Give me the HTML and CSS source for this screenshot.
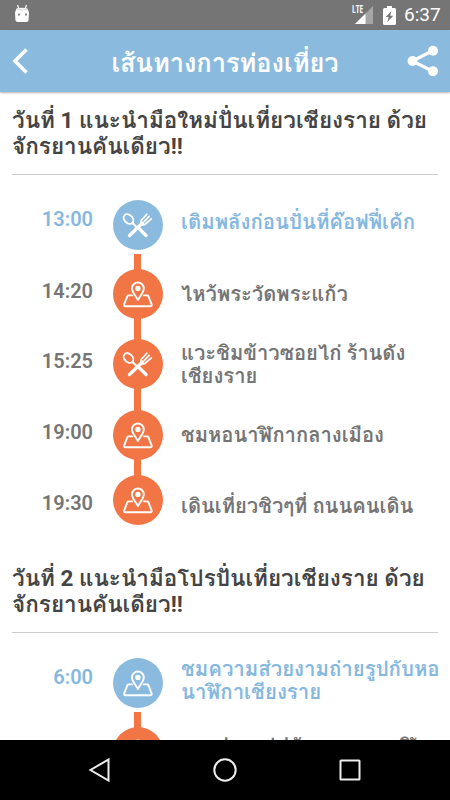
FILE: index.html
```
<!DOCTYPE html>
<html lang="th">
<head>
  <meta charset="UTF-8" />
  <meta name="viewport" content="width=device-width, initial-scale=1.0" />
  <title>เส้นทางการท่องเที่ยว</title>
  <link rel="stylesheet" href="styles.css">
</head>
<body>
  <svg class="sprite" width="0" height="0">
    <symbol id="icon-food" viewBox="0 0 50 50">
      <g fill="none" stroke="#fff" stroke-linecap="round">
        <ellipse cx="15.500" cy="19" rx="4" ry="5.500" transform="rotate(-45 15.500 19)" stroke-width="1.900" />
        <path d="M19.500 23l4 4" stroke-width="2.200" />
        <path d="M25.500 28l7.500 7.500M16.500 35.500l13-12.500" stroke-width="3.300" />
        <path d="M28.200 20.500q-.9 2.600.4 3.800t3.200.2l6.600-5.700M28.200 20.500l5.600-6.300M31.300 21.300l4.800-4.900" stroke-width="1.700" />
      </g>
    </symbol>
    <symbol id="icon-place" viewBox="0 0 50 50">
      <g fill="none" stroke="#fff" stroke-width="1.900" stroke-linejoin="round" stroke-linecap="round">
        <path d="M19 26.400h-3.500q-.8 0-1.100.8l-3.200 8.200q-.6 1.900 1.300 1.900h24.800q1.900 0 1.300-1.900l-3.200-8.200q-.3-.8-1.100-.8h-3.500" />
        <path d="M24.900 31c-2-4-5.900-7.800-5.900-11.600a5.900 5.900 0 0 1 11.800 0c0 3.800-3.900 7.600-5.900 11.600z" />
      </g>
      <circle cx="24.900" cy="19.400" r="2.700" fill="#fff" />
    </symbol>
  </svg>

  <div class="status-bar">
    <svg class="status-bot" width="16" height="19" viewBox="0 0 16 19">
      <path d="M3.500 1l1.300 3.500M12.500 1l-1.300 3.500" stroke="#fff" stroke-width="1.200" />
      <path d="M2.500 4.500q5.500-1.500 11 0L15 8.500l-.4 7.500q-.3 2-2.300 2H3.700q-2 0-2.300-2L1 8.500z" fill="#fff" />
      <path d="M3 5.500h10" stroke="#ddd" stroke-width="1.500" />
      <path d="M4 10.500h2M11 10.500h2" stroke="#888" stroke-width="1.800" />
    </svg>
    <div class="status-right">
      <span class="lte">LTE</span>
      <svg class="signal" width="18" height="18" viewBox="0 0 18 18">
        <path d="M18 0v18H0z" fill="#a6a6a6" />
        <path d="M10.500 7.500V18H0z" fill="#fff" />
      </svg>
      <svg class="battery" width="13" height="19" viewBox="0 0 13 19">
        <path d="M4 0h5v2h2.500q1.500 0 1.500 1.500v14q0 1.500-1.500 1.500h-10Q0 19 0 17.500v-14Q0 2 1.500 2H4z" fill="#fff" />
        <path d="M8.500 5L2.700 11h3l-1.400 5 6-6.200H7.200z" fill="#757575" />
      </svg>
      <span class="clock">6:37</span>
    </div>
  </div>

  <header class="toolbar">
    <svg width="16" height="26" viewBox="0 0 16 26">
      <path d="M14.500 1.500L3 13l11.500 11.500" fill="none" stroke="#fff" stroke-width="3.600" />
    </svg>
    <h1>เส้นทางการท่องเที่ยว</h1>
    <svg width="32" height="32" viewBox="0 0 32 32">
      <path d="M26 5.500L5.500 16 26 26.500" fill="none" stroke="#fff" stroke-width="3.200" />
      <g fill="#fff">
        <circle cx="26" cy="5.700" r="5" />
        <circle cx="5.500" cy="16" r="5" />
        <circle cx="26" cy="26.300" r="5" />
      </g>
    </svg>
  </header>

  <main class="content">
    <section class="day">
      <h2>วันที่ 1 แนะนำมือใหม่ปั่นเที่ยวเชียงราย ด้วย<br>จักรยานคันเดียว!!</h2>
      <ul class="timeline">
        <li class="stop first">
          <span class="time">13:00</span>
          <div class="rail"><svg class="dot"><use href="#icon-food" /></svg></div>
          <p class="place">เติมพลังก่อนปั่นที่ค๊อฟฟี่เค้ก</p>
        </li>
        <li class="stop">
          <span class="time">14:20</span>
          <div class="rail"><svg class="dot"><use href="#icon-place" /></svg></div>
          <p class="place">ไหว้พระวัดพระแก้ว</p>
        </li>
        <li class="stop">
          <span class="time">15:25</span>
          <div class="rail"><svg class="dot"><use href="#icon-food" /></svg></div>
          <p class="place">แวะชิมข้าวซอยไก่ ร้านดัง<br>เชียงราย</p>
        </li>
        <li class="stop">
          <span class="time">19:00</span>
          <div class="rail"><svg class="dot"><use href="#icon-place" /></svg></div>
          <p class="place">ชมหอนาฬิกากลางเมือง</p>
        </li>
        <li class="stop last">
          <span class="time">19:30</span>
          <div class="rail"><svg class="dot"><use href="#icon-place" /></svg></div>
          <p class="place">เดินเที่ยวชิวๆที่ ถนนคนเดิน</p>
        </li>
      </ul>
    </section>

    <section class="day">
      <h2>วันที่ 2 แนะนำมือโปรปั่นเที่ยวเชียงราย ด้วย<br>จักรยานคันเดียว!!</h2>
      <ul class="timeline">
        <li class="stop first">
          <span class="time">6:00</span>
          <div class="rail"><svg class="dot"><use href="#icon-place" /></svg></div>
          <p class="place">ชมความส่วยงามถ่ายรูปกับหอ<br>นาฬิกาเชียงราย</p>
        </li>
        <li class="stop next">
          <span class="time"></span>
          <div class="rail"><svg class="dot"><use href="#icon-place" /></svg></div>
          <p class="place">แวะถ่ายรูปคู่กับสวนหอนาฬิกา</p>
        </li>
      </ul>
    </section>
  </main>

  <nav class="nav-bar">
    <svg width="24" height="26" viewBox="0 0 24 26">
      <path d="M20.500 2.500v21L2.500 13z" />
    </svg>
    <svg width="26" height="26" viewBox="0 0 26 26">
      <circle cx="13" cy="13" r="10.700" />
    </svg>
    <svg width="24" height="26" viewBox="0 0 24 26">
      <rect x="2.500" y="3.500" width="19" height="19" rx=".5" />
    </svg>
  </nav>
</body>
</html>
```
FILE: styles.css
```
* {
  box-sizing: border-box;
}
body {
  margin: 0;
  height: 800px;
  display: flex;
  flex-direction: column;
  overflow: hidden;
  background: #fff;
  font-family: Roboto, Waree, Umpush, Loma, Garuda, "Noto Sans", sans-serif;
}
h1, h2, ul, p {
  margin: 0;
  padding: 0;
}
.sprite {
  display: none;
}

.status-bar {
  flex: none;
  height: 30px;
  padding: 0 10px 0 14px;
  display: flex;
  justify-content: space-between;
  align-items: center;
  background: #757575;
  color: #fff;
}
.status-bot {
  margin-bottom: 3px;
}
.status-right {
  display: flex;
  align-items: center;
}
.lte {
  align-self: flex-start;
  margin-right: -16px;
  padding-top: 1px;
  font-family: "Open Sans", sans-serif;
  font-size: 11px;
  font-weight: bold;
  line-height: 16px;
  transform: scaleX(0.6);
  transform-origin: left;
}
.battery {
  margin-left: 10px;
}
.clock {
  width: 36px;
  margin-left: 8px;
  font-size: 19px;
  line-height: 30px;
}

.toolbar {
  flex: none;
  height: 62px;
  padding: 0 11px 0 12px;
  display: flex;
  justify-content: space-between;
  align-items: center;
  background: #8bbadf;
  box-shadow: 0 1px 2px rgba(0,0,0,0.3);
}
.toolbar h1 {
  margin-left: 15px;
  padding-top: 3px;
  color: #fff;
  font-size: 25.4px;
  line-height: 36px;
}

.content {
  flex: 1;
  min-height: 0;
  overflow: hidden;
  padding: 15px 12px 0;
}
.day h2 {
  height: 68px;
  border-bottom: 1px solid #ccc;
  color: #444;
  font-size: 22.5px;
  line-height: 26px;
  white-space: nowrap;
}
.timeline {
  list-style: none;
  padding-top: 9px;
  margin-bottom: 28px;
}
.stop {
  height: 70px;
  display: flex;
  color: #757575;
}
.stop:nth-child(n+3) {
  height: 71px;
}
.time {
  flex: none;
  width: 81px;
  padding-top: 25px;
  text-align: right;
  font-size: 20px;
  font-weight: 600;
  line-height: 24px;
}
.rail {
  flex: none;
  width: 50px;
  margin: 0 18.5px 0 19.5px;
  padding-top: 15px;
  background: linear-gradient(#f47645, #f47645) center / 7px 100% no-repeat;
}
.dot {
  display: block;
  width: 50px;
  height: 50px;
  border-radius: 50%;
  background: #f27545;
}
.place {
  align-self: center;
  padding-top: 10px;
  font-size: 20.2px;
  font-weight: 600;
  line-height: 23px;
  white-space: nowrap;
}

.first {
  color: #85b8df;
}
.first .time {
  padding-top: 23px;
}
.first .rail {
  padding-top: 16px;
  background: none;
}
.first .dot {
  background: #8bbadf;
}
.first .place {
  padding-top: 7px;
  font-size: 20.4px;
}
.last .rail {
  padding-top: 9px;
  background-size: 7px 20px;
  background-position: top;
}
.next .place {
  align-self: flex-start;
  padding-top: 23px;
}

.nav-bar {
  flex: none;
  height: 60px;
  padding: 0 88px;
  display: flex;
  justify-content: space-between;
  align-items: center;
  background: #000;
}
.nav-bar svg {
  fill: none;
  stroke: #eee;
  stroke-width: 2;
}
```
